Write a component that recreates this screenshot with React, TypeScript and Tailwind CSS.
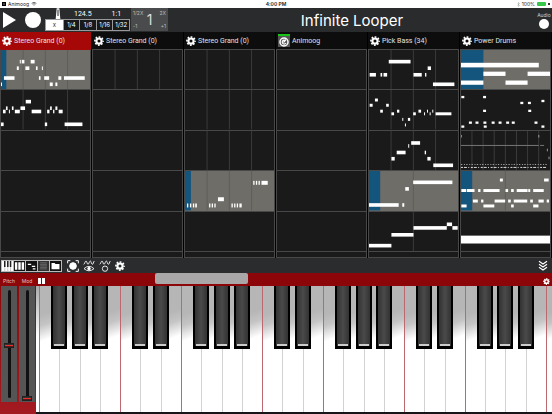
import React from "react";

type Note = [x: number, y: number, w: number, h?: number];

interface Clip {
  notes?: Note[];
  lines?: number;
  active?: boolean;
  progress?: number;
  noteHeight?: number;
  drums?: boolean;
}

interface Track {
  name: string;
  selected?: boolean;
  app?: boolean;
  clips: Clip[];
}

const at = (y: number, spans: number[][]): Note[] => spans.map(([a, b]) => [a, y, b - a]);

const tracks: Track[] = [
  {
    name: "Stereo Grand (0)",
    selected: true,
    clips: [
      {
        active: true, progress: 16, lines: 4,
        notes: [[0, 99, 3], [9, 80, 32], [48, 50, 6], [57, 30, 3], [63, 30, 8], [74, 50, 12], [90, 30, 12], [106, 50, 5], [124, 50, 3], [115, 80, 5], [131, 80, 15], [148, 99, 9], [165, 99, 6], [174, 80, 9], [191, 80, 63]],
      },
      {
        lines: 4,
        notes: [[0, 99, 8], [6, 60, 8], [15, 50, 5], [24, 60, 3], [33, 50, 5], [42, 60, 15], [59, 50, 14], [75, 30, 16], [93, 60, 29], [140, 60, 7], [149, 50, 5], [158, 60, 4], [165, 50, 6], [175, 60, 12], [133, 99, 7], [193, 99, 54]],
      },
      {}, {}, {}, {},
    ],
  },
  { name: "Stereo Grand (0)", clips: [{ lines: 4 }, {}, {}, {}, {}, {}] },
  {
    name: "Stereo Grand (0)",
    clips: [
      { lines: 4 }, { lines: 4 }, { lines: 4 },
      {
        active: true, progress: 18, lines: 4, noteHeight: 12,
        notes: [[6, 99, 4], [15, 99, 4], [24, 99, 4], [31, 99, 5], [73, 99, 4], [81, 99, 4], [89, 99, 4], [100, 80, 18], [141, 99, 4], [149, 99, 4], [157, 99, 4], [165, 99, 7], [207, 30, 4], [215, 30, 4], [223, 30, 4], [232, 30, 19]],
      },
      {}, {},
    ],
  },
  { name: "Animoog", app: true, clips: [{}, {}, {}, {}, {}, {}] },
  {
    name: "Pick Bass (34)",
    clips: [
      { lines: 4, notes: [[2, 70, 19], [35, 70, 5], [44, 70, 11], [60, 30, 66], [135, 70, 25], [170, 70, 4], [178, 50, 10], [194, 99, 65]] },
      {
        lines: 4, noteHeight: 9,
        notes: [[2, 42, 9], [18, 26, 9], [34, 60, 8], [52, 42, 8], [68, 68, 8], [85, 60, 7], [101, 85, 3], [109, 102, 3], [118, 85, 7], [134, 68, 8], [150, 60, 8], [167, 68, 3], [176, 60, 3], [184, 68, 3], [192, 60, 3], [202, 68, 48]],
      },
      { lines: 4, notes: [[84, 60, 27], [119, 40, 3], [128, 31, 27], [169, 60, 4], [68, 79, 10], [177, 79, 10], [195, 99, 60]] },
      { active: true, progress: 34, lines: 2, notes: [[0, 98, 90], [101, 98, 6], [110, 49, 11], [134, 29, 119]] },
      { lines: 2, notes: [[0, 97, 68], [68, 64, 67], [135, 43, 101], [236, 32, 16], [253, 43, 16]] },
      {},
    ],
  },
  {
    name: "Power Drums",
    clips: [
      { active: true, progress: 68, noteHeight: 13, notes: [[0, 39, 236, 14], [68, 66, 67], [202, 66, 68], [0, 93, 68], [135, 93, 67]] },
      {
        noteHeight: 7,
        notes: [[1, 18, 9], [67, 18, 9], [180, 36, 9], [203, 36, 9], [244, 30, 9], [67, 60, 9], [204, 60, 9], [24, 96, 9], [44, 96, 9], [68, 96, 9], [93, 96, 9], [114, 96, 9], [137, 96, 9], [154, 96, 9], [223, 96, 9], [1, 108, 9], [69, 108, 9], [244, 108, 9]],
      },
      { drums: true, lines: 8 },
      {
        active: true, progress: 34, lines: 2, noteHeight: 9,
        notes: [
          ...at(23, [[118, 127], [252, 266]]),
          ...at(55, [[1, 16], [18, 41], [52, 59], [68, 117], [135, 143], [152, 160], [169, 202], [204, 210], [219, 251]]),
          ...at(87, [[36, 51], [61, 68], [102, 134], [143, 151], [160, 201], [210, 218], [235, 251], [260, 267]]),
          ...at(102, [[1, 17], [68, 101], [152, 160], [219, 235]]),
        ],
      },
      { noteHeight: 24, notes: [[0, 72, 270]] },
      {},
    ],
  },
];

function Gear({ className }: { className: string }) {
  return (
    <svg viewBox="0 0 24 24" className={className} fill="none" stroke="currentColor" aria-hidden="true">
      <circle cx="12" cy="12" r="6.2" strokeWidth="5" />
      <circle cx="12" cy="12" r="9.8" strokeWidth="3.8" strokeDasharray="4.2 3.497" strokeDashoffset="2.1" />
    </svg>
  );
}

function ClipCell({ clip, label }: { clip: Clip; label: string }) {
  const line = clip.active ? "#5f5e59" : "#3b3b3b";
  const h = clip.noteHeight ?? 11;
  return (
    <button
      aria-label={label}
      className={`block min-h-0 w-full overflow-hidden border-b border-[#484848] ${clip.active ? "bg-[#6e6d68]" : "bg-[#1a1a1a]"}`}
    >
      <svg viewBox="0 0 270 120" preserveAspectRatio="none" className="block size-full">
        {clip.progress && <rect width={clip.progress} height="120" fill="#14557d" />}
        {clip.lines &&
          Array.from({ length: clip.lines - 1 }, (_, i) => (
            <rect key={i} x={((i + 1) * 270) / clip.lines! - 2} width="3" height="120" fill={line} />
          ))}
        {clip.drums && (
          <g fill="none" strokeWidth="3">
            <path d="M0 44H236M240 44H252" stroke="#777" />
            <path d="M0 102H262" stroke="#aaa" strokeDasharray="4 5 3 4" />
            <path d="M0 111H262" stroke="#ddd" strokeDasharray="6 3 9 4 3 5" />
            <path d="M1 12V20M236 12V20M262 54V62M267 78V86" stroke="#999" />
          </g>
        )}
        {clip.notes?.map(([x, y, w, nh], i) => (
          <rect key={i} x={x} y={y} width={w} height={nh ?? h} fill="#fff" />
        ))}
      </svg>
    </button>
  );
}

function TrackColumn({ track }: { track: Track }) {
  return (
    <section className="flex min-w-0 flex-1 flex-col border-r border-black">
      <button
        className={`flex h-[17px] items-center gap-[2px] pl-[2px] text-left font-['Roboto','Liberation_Sans',sans-serif] text-[7px] leading-[10px] text-[#e2e2e2] ${track.selected ? "bg-[#a60808]" : "bg-[#0d0d0d]"}`}
      >
        {track.app ? (
          <span className="flex h-[13px] w-[12px] items-center justify-center border-t-2 border-[#16c516] bg-[#555] text-white">
            <svg viewBox="0 0 20 20" className="size-[10px]" fill="none" stroke="currentColor" strokeWidth="3">
              <circle cx="10" cy="10" r="8" />
              <path d="M13 7a4 4 0 1 0 1 5M9 11l5-6" strokeWidth="2.4" />
            </svg>
          </span>
        ) : (
          <Gear className="size-[10px] shrink-0 text-white" />
        )}
        <span className="whitespace-nowrap">{track.name}</span>
      </button>
      <div
        className={`grid h-[209px] grid-rows-[20fr_20fr_20fr_20fr_20fr_3fr] border-x border-t border-x-[#484848] ${track.selected ? "border-t-[#a60808]" : "border-t-[#484848]"}`}
      >
        {track.clips.map((clip, i) => (
          <ClipCell key={i} clip={clip} label={`${track.name} clip ${i + 1}`} />
        ))}
      </div>
    </section>
  );
}

function TopBar() {
  return (
    <header className="flex h-[24px] bg-[#2a2b2d] text-white">
      <button aria-label="Play" className="flex w-[20px] items-center pl-[3px]">
        <svg viewBox="0 0 13 16" className="h-[16px] w-[13px]" fill="currentColor"><path d="M0 0L13 8L0 16Z" /></svg>
      </button>
      <button aria-label="Record" className="flex w-[25px] items-center justify-center">
        <span className="size-[16px] rounded-full bg-white" />
      </button>
      <div className="w-[85px]">
        <div className="flex h-[11px] items-center text-[7px] leading-[10px]">
          <button aria-label="Metronome" className="ml-[10px] h-[11px] w-[6px]">
            <svg viewBox="0 0 18 33" className="size-full">
              <path d="M5 1H13L16 33H2Z" fill="#fff" />
              <path d="M9 5V24" stroke="#222" strokeWidth="3" />
            </svg>
          </button>
          <button className="ml-[13px] font-['Roboto','Liberation_Sans',sans-serif]">124.5</button>
          <button className="ml-[20px] font-['Roboto','Liberation_Sans',sans-serif]">1:1</button>
        </div>
        <div className="grid h-[12px] grid-cols-5 border border-[#999] text-[6px] leading-[10px]">
          {["x", "1/4", "1/8", "1/16", "1/32"].map((d, i) => (
            <button key={d} className={i === 0 ? "bg-white text-[#333]" : "border-l border-[#999] bg-[#18191b] text-white"}>
              {d}
            </button>
          ))}
        </div>
      </div>
      <div className="ml-px grid h-[23px] w-[37px] grid-cols-[1fr_auto_1fr] bg-[#4a4b4c] px-[2px] text-[5px] leading-[6px] text-[#bbb]">
        <div className="flex flex-col items-start justify-between py-[2px]">
          <button>1/2X</button>
          <button>-1</button>
        </div>
        <span className="self-center text-[14px] leading-[16px] text-[#ddd]">1</span>
        <div className="flex flex-col items-end justify-between py-[2px]">
          <button>2X</button>
          <button>+1</button>
        </div>
      </div>
      <h1 className="flex-1 text-center text-[15px] leading-[25px] font-normal">Infinite Looper</h1>
      <button className="flex w-[16px] flex-col items-center pt-[4px] text-[5px] leading-[6px] text-[#ccc]">
        Audio
        <span className="mt-px size-[10px] rounded-full bg-white" />
      </button>
    </header>
  );
}

const views: { label: string; art: React.ReactNode }[] = [
  {
    label: "Keyboard",
    art: <><rect width="36" height="33" fill="#fff" /><path d="M9 0V20M19 0V20M28 0V20" stroke="#222" strokeWidth="5" /><path d="M9 20V33M19 20V33M28 20V33" stroke="#888" strokeWidth="1.5" /></>,
  },
  { label: "Pads", art: <path d="M3 4h8v25h-8zM14 4h8v25h-8zM25 4h8v25h-8z" fill="#fff" /> },
  { label: "Piano roll", art: <path d="M6 9h11v4H6zM19 16h11v4H19zM22 24h9v4h-9z" fill="#fff" /> },
  { label: "List", art: <><rect width="36" height="33" fill="#333" /><path d="M7 6H29M7 11H29M7 16H29M7 21H29M7 26H29" stroke="#888" strokeWidth="2" /></> },
  { label: "Files", art: <path d="M5 7h10l3 3h13v17H5z" fill="#fff" /> },
];

function ViewBar() {
  return (
    <nav className="flex h-[15px] items-center bg-[#2a2c2e] pl-[1px] pr-[4px] text-white">
      {views.map((v) => (
        <button key={v.label} aria-label={v.label} className="-mr-px h-[12px] w-[13px] border border-[#bbb] bg-[#111]">
          <svg viewBox="0 0 36 33" preserveAspectRatio="none" className="block size-full">{v.art}</svg>
        </button>
      ))}
      <button aria-label="Capture" className="ml-[6px]">
        <svg viewBox="0 0 36 36" className="size-[12px]" fill="none" stroke="currentColor" strokeWidth="3">
          <path d="M2 10V2H10M26 2H34V10M34 26V34H26M10 34H2V26" />
          <circle cx="18" cy="18" r="10" fill="currentColor" />
        </svg>
      </button>
      <button aria-label="Show waves" className="ml-[4px]">
        <svg viewBox="0 0 36 36" className="size-[12px]" fill="none" stroke="currentColor" strokeWidth="2.6">
          <path d="M2 13C5 13 6 3 9 3S12 13 15 13S19 3 22 3S25 13 28 13S31 6 34 3M3 26Q18 12 33 26Q18 39 3 26Z" />
          <circle cx="18" cy="26" r="4" fill="currentColor" />
        </svg>
      </button>
      <button aria-label="Record waves" className="ml-[4px]">
        <svg viewBox="0 0 36 36" className="size-[12px]" fill="none" stroke="currentColor" strokeWidth="2.6">
          <path d="M2 13C5 13 6 3 9 3S12 13 15 13S19 3 22 3S25 13 28 13S31 6 34 3" />
          <circle cx="18" cy="26" r="8" />
        </svg>
      </button>
      <button aria-label="Settings" className="ml-[4px]"><Gear className="size-[10px]" /></button>
      <button aria-label="Collapse" className="ml-auto">
        <svg viewBox="0 0 30 36" className="h-[12px] w-[10px]" fill="none" stroke="currentColor" strokeWidth="3.5">
          <path d="M3 4L15 12L27 4M3 13L15 21L27 13M3 22L15 30L27 22" />
        </svg>
      </button>
    </nav>
  );
}

function Wheel({ id, label, value }: { id: string; label: string; value: number }) {
  return (
    <div className="w-[16px]">
      <label htmlFor={id} className="flex h-[13px] items-center justify-center pt-[2px] text-[5px] leading-[8px] text-[#e6c0c0]">
        {label}
      </label>
      <div className="relative flex h-[116px] justify-center bg-[#555] pt-[3px]">
        <span className="absolute top-[4px] h-[108px] w-[3px] rounded-full bg-[#111]" />
        <input
          id={id}
          type="range"
          defaultValue={value}
          className="relative h-[112px] w-[10px] appearance-none bg-transparent [direction:rtl] [writing-mode:vertical-lr] [&::-webkit-slider-thumb]:h-[5px] [&::-webkit-slider-thumb]:w-[10px] [&::-webkit-slider-thumb]:appearance-none [&::-webkit-slider-thumb]:border [&::-webkit-slider-thumb]:border-[#222] [&::-webkit-slider-thumb]:bg-[linear-gradient(#333_1px,#e63030_1px,#e63030_2px,#5a1a1a_2px)]"
        />
      </div>
    </div>
  );
}

const octave = ["F", "G", "A", "B", "C", "D", "E"];
const keys = Array.from({ length: 26 }, (_, i) => octave[i % 7]);

function Piano() {
  return (
    <div className="flex h-[128px] overflow-hidden border-b-2 border-[#15151a] bg-white">
      <span className="w-[3px] bg-linear-to-b from-[#aaa] to-white to-40%" />
      {keys.map((k, i) => (
        <div
          key={i}
          className={`relative basis-0 border-l ${i === 25 ? "grow" : "grow-4"} ${k === "F" || k === "C" ? "border-[#bb6870]" : "border-[#d2d2d2]"} bg-[linear-gradient(160deg,#b6b6b6_22%,#c4c4c4_30%,#fff_42%)]`}
        >
          <button aria-label={k} className="block size-full" />
          {k !== "B" && k !== "E" && i < 25 && (
            <button
              aria-label={`${k} sharp`}
              className="absolute top-0 -right-[8px] z-10 flex h-[63px] w-[16px] items-end border-x-2 border-b-3 border-black bg-linear-to-r from-[#333] via-[#4a4a4a] to-[#333]"
            >
              <span className="mx-px h-[2px] flex-1 bg-[#ccc]" />
            </button>
          )}
        </div>
      ))}
    </div>
  );
}

function KeyboardPanel() {
  return (
    <div className="flex bg-[#8c0508] text-white">
      <div className="flex w-[36px] gap-[2px] bg-linear-to-b from-[#8c0508] to-[#a31a20] pl-px">
        <Wheel id="pitch" label="Pitch" value={50} />
        <Wheel id="mod" label="Mod" value={0} />
      </div>
      <div className="min-w-0 flex-1">
        <div className="flex h-[13px] items-start">
          <button aria-label="Hold" className="mt-[5px] mr-[2px] ml-[2px] flex gap-px">
            <span className="h-[6px] w-[3px] bg-white" />
            <span className="h-[6px] w-[3px] bg-white" />
          </button>
          <div className="ml-[21%] h-[11px] w-[18%] rounded-[2px] bg-[#a9a7a8]" />
          <button aria-label="Keyboard settings" className="mt-[5px] mr-[2px] ml-auto">
            <Gear className="size-[7px]" />
          </button>
        </div>
        <Piano />
      </div>
    </div>
  );
}

export default function App() {
  return (
    <main className="w-full overflow-hidden bg-black font-['Inter','Liberation_Sans',sans-serif]">
      <div className="grid h-[8px] grid-cols-3 items-center bg-white px-[2px] text-[5px] leading-[8px] text-[#222]">
        <div className="flex items-center gap-[2px]">
          <span className="flex size-[4px] items-center justify-center bg-black text-white">
            <svg viewBox="0 0 8 8" className="size-[4px]" fill="none" stroke="currentColor"><path d="M5 2L3 4L5 6" /></svg>
          </span>
          <span>Animoog</span>
          <svg viewBox="0 0 16 12" className="h-[4px] w-[6px]" fill="none" stroke="currentColor" strokeWidth="2">
            <path d="M1 4Q8 -2 15 4M4 7Q8 3 12 7" /><path d="M7 10h2" />
          </svg>
        </div>
        <span className="text-center font-semibold">4:00 PM</span>
        <div className="flex items-center justify-end gap-[2px]">
          <svg viewBox="0 0 6 10" className="h-[5px] w-[3px]" fill="none" stroke="#999"><path d="M1 3L5 7L3 9V1L5 3L1 7" /></svg>
          <span>100%</span>
          <span className="h-[4px] w-[9px] rounded-[1px] bg-[#35c84a]" />
          <span className="size-[2px] bg-[#333]" />
        </div>
      </div>
      <TopBar />
      <div className="flex">
        {tracks.map((t, i) => (
          <TrackColumn key={i} track={t} />
        ))}
      </div>
      <ViewBar />
      <KeyboardPanel />
    </main>
  );
}
